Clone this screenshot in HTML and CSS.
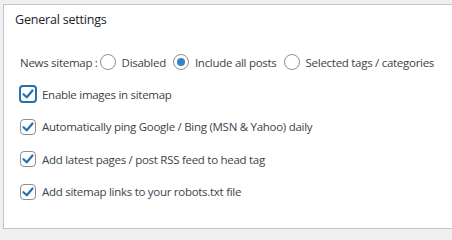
FILE: index.html
```html
<!DOCTYPE html>
<html>
<head>
<meta charset="utf-8">
<link rel="stylesheet" href="styles.css">
</head>
<body>
<div class="panel">
  <h2 class="title">General settings</h2>
  <div class="rows">
    <div class="row">
      <span class="label">News sitemap :</span>
      <span class="radio"></span><span class="opt">Disabled</span>
      <span class="radio on"></span><span class="opt">Include all posts</span>
      <span class="radio"></span><span class="opt">Selected tags / categories</span>
    </div>
    <div class="row">
      <span class="check focus"><svg viewBox="0 0 16 16" width="16" height="16"><path d="M3.5 8.2 L6.8 11.3 L12.5 4.5" fill="none" stroke="#2271b1" stroke-width="2.2" stroke-linecap="round" stroke-linejoin="round"/></svg></span>
      <span class="text">Enable images in sitemap</span>
    </div>
    <div class="row">
      <span class="check"><svg viewBox="0 0 16 16" width="16" height="16"><path d="M3.5 8.2 L6.8 11.3 L12.5 4.5" fill="none" stroke="#2271b1" stroke-width="2.2" stroke-linecap="round" stroke-linejoin="round"/></svg></span>
      <span class="text">Automatically ping Google / Bing (MSN &amp; Yahoo) daily</span>
    </div>
    <div class="row">
      <span class="check"><svg viewBox="0 0 16 16" width="16" height="16"><path d="M3.5 8.2 L6.8 11.3 L12.5 4.5" fill="none" stroke="#2271b1" stroke-width="2.2" stroke-linecap="round" stroke-linejoin="round"/></svg></span>
      <span class="text">Add latest pages / post RSS feed to head tag</span>
    </div>
    <div class="row">
      <span class="check"><svg viewBox="0 0 16 16" width="16" height="16"><path d="M3.5 8.2 L6.8 11.3 L12.5 4.5" fill="none" stroke="#2271b1" stroke-width="2.2" stroke-linecap="round" stroke-linejoin="round"/></svg></span>
      <span class="text">Add sitemap links to your robots.txt file</span>
    </div>
  </div>
</div>
</body>
</html>
```

FILE: styles.css
```css
html, body {
  margin: 0;
  padding: 0;
  background: #f0f0f1;
  width: 452px;
  height: 232px;
  overflow: hidden;
}
body {
  font-family: "Open Sans", "Noto Sans", sans-serif;
  font-size: 11.5px;
  letter-spacing: -0.28px;
  color: #3c434a;
}
.panel {
  margin: 4px 0 0 3px;
  width: 460px;
  background: #fff;
  border: 1px solid #c3c4c7;
  border-right: none;
  padding: 5px 0 0 11px;
  box-sizing: border-box;
  height: 225px;
}
.title {
  margin: 0;
  font-size: 12.5px;
  font-weight: 400;
  letter-spacing: -0.2px;
  line-height: 20px;
  color: #1d2327;
}
.rows {
  margin-top: 16px;
  padding-left: 5px;
  display: flex;
  flex-direction: column;
}
.row {
  display: flex;
  align-items: center;
  height: 32.5px;
  white-space: nowrap;
}
.row:first-child {
  height: 32px;
}
.label {
  margin-right: 2px;
}
.radio {
  width: 16px;
  height: 16px;
  box-sizing: border-box;
  border: 1px solid #8c8f94;
  border-radius: 50%;
  margin-right: 6px;
  position: relative;
  flex: none;
}
.radio.on::after {
  content: "";
  position: absolute;
  left: 3px;
  top: 3px;
  width: 8px;
  height: 8px;
  border-radius: 50%;
  background: #3582c4;
}
.opt {
  margin-right: 7px;
}
.check {
  width: 16px;
  height: 16px;
  box-sizing: border-box;
  border: 1px solid #8c8f94;
  border-radius: 4px;
  margin-right: 6px;
  display: flex;
  align-items: center;
  justify-content: center;
  flex: none;
}
.check svg {
  flex: none;
}
.check.focus {
  width: 18px;
  height: 18px;
  margin-left: -1px;
  margin-right: 5px;
  border: 2px solid #2271b1;
  border-radius: 4px;
}
```
